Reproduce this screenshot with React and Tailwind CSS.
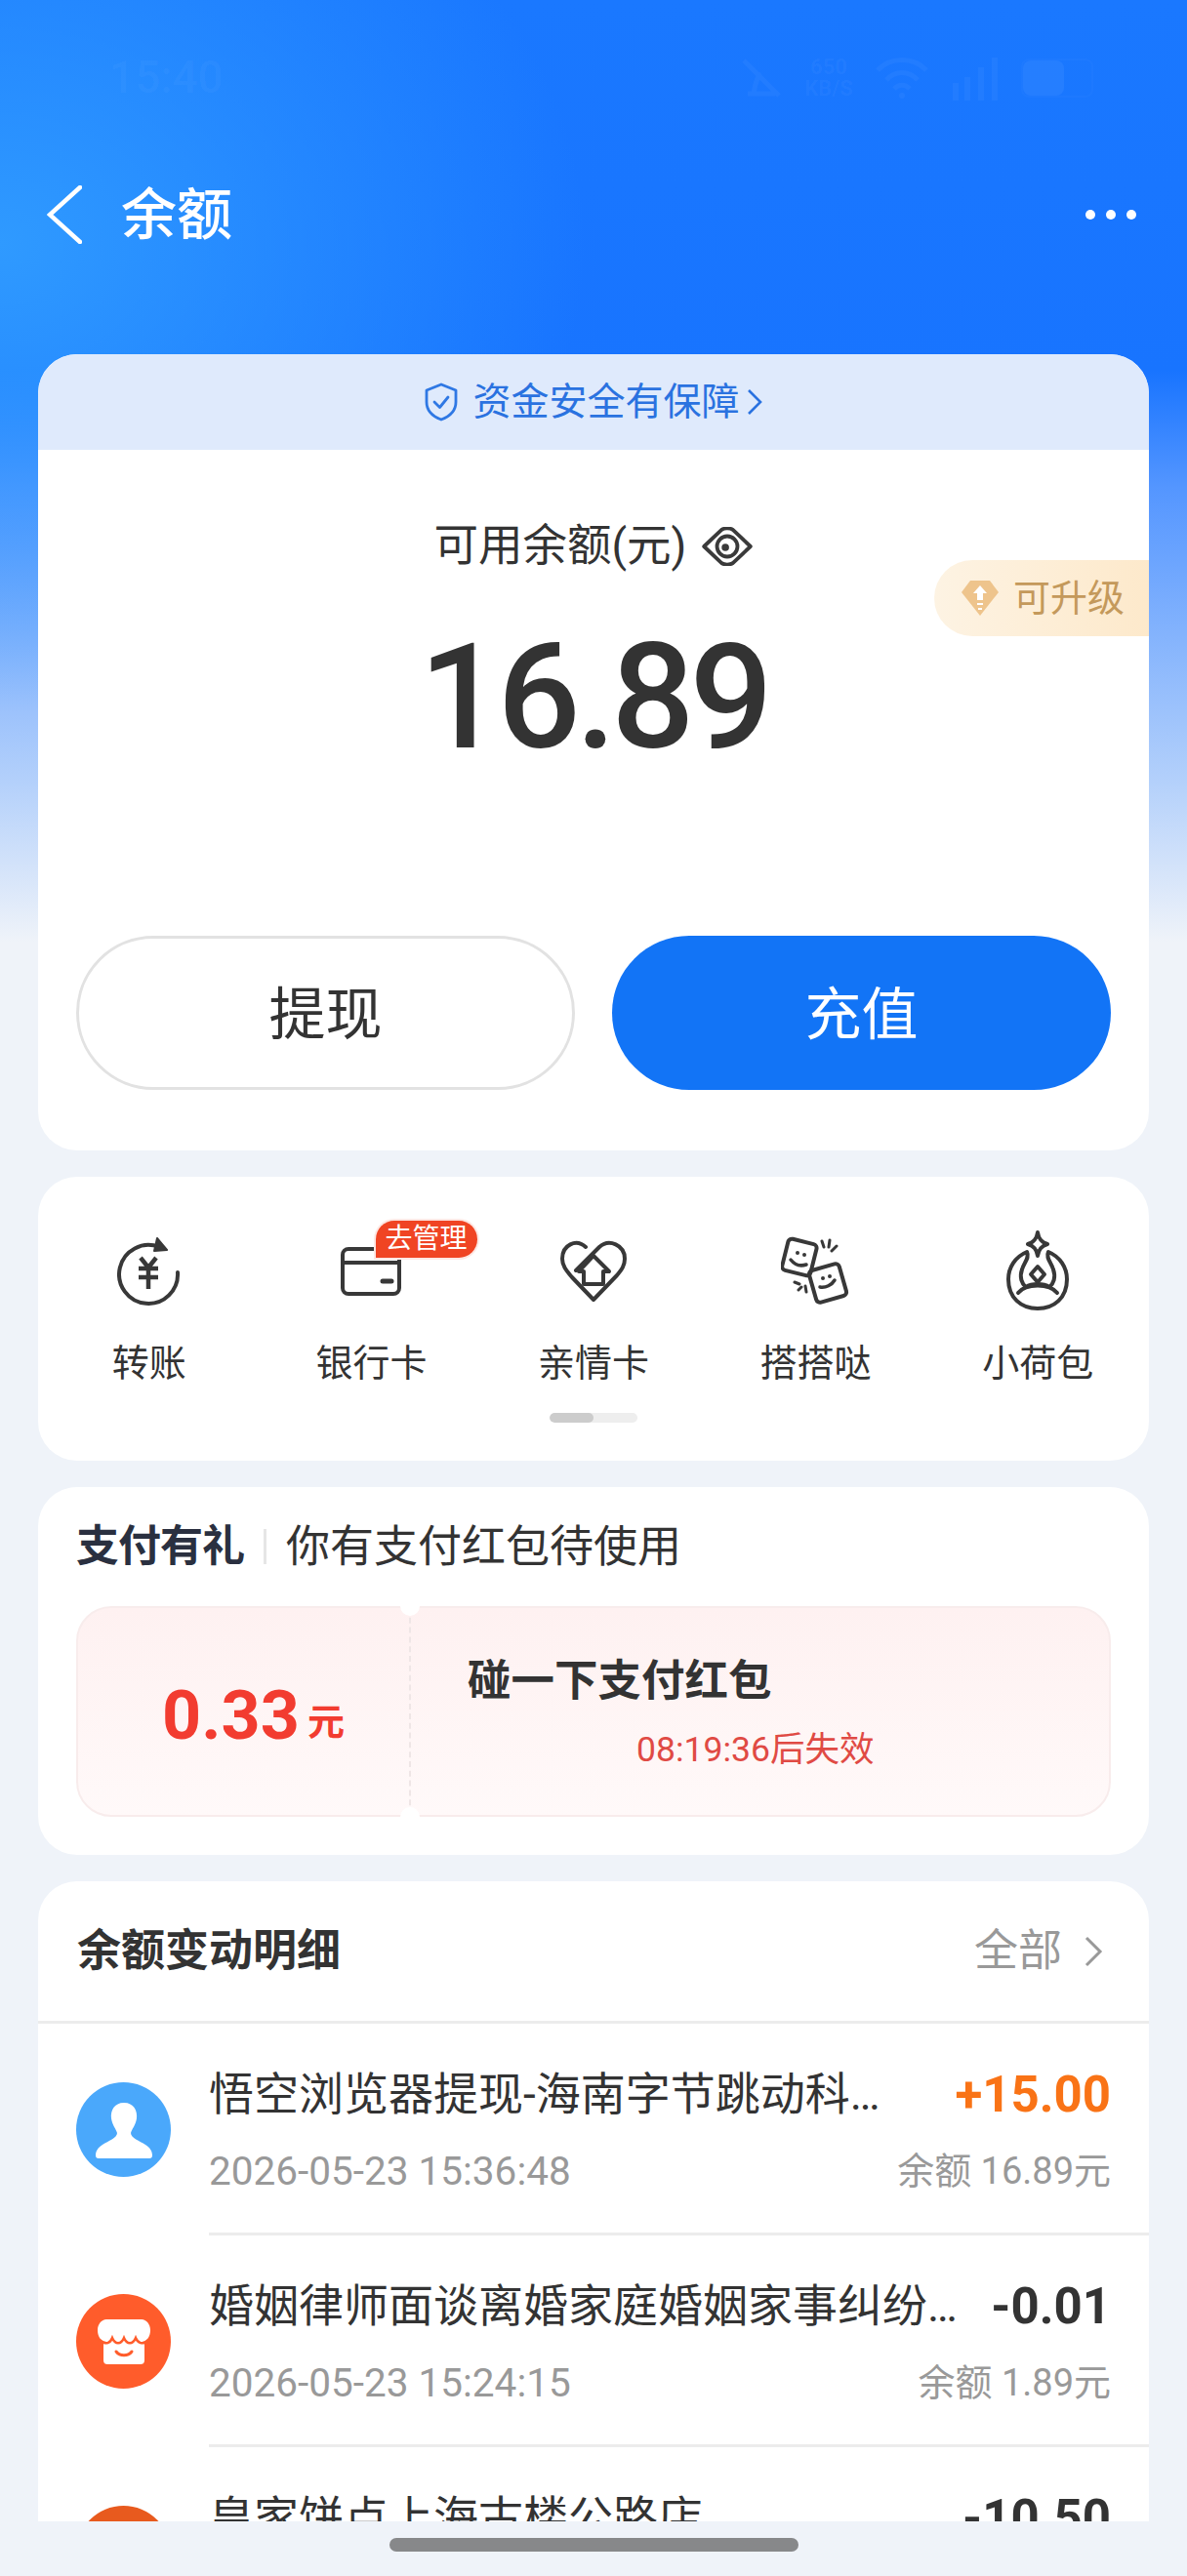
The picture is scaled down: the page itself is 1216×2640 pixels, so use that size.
import { ChevronRight } from 'lucide-react';

const cjk = "font-['Roboto','Noto_Sans_CJK_SC',sans-serif]";

const TransferIcon = () => (
	<svg width="66" height="72" viewBox="0 0 66 72" fill="none" stroke="#383838" strokeWidth="4" strokeLinecap="round" strokeLinejoin="round">
		<path d="M43 11 A30 30 0 1 0 62 37" />
		<path d="M41 2 L51 14 L38 15 Z" fill="#383838" strokeWidth="2" />
		<path d="M24 22 L32 32 L40 22 M22 33 H42 M22 42 H42 M32 32 V54" strokeWidth="4.5" strokeLinecap="butt" />
	</svg>
);

const CardIcon = () => (
	<svg width="62" height="50" viewBox="0 0 62 50" fill="none" stroke="#383838" strokeWidth="4">
		<rect x="2" y="2" width="58" height="46" rx="6" />
		<path d="M2 16 H60" />
		<path d="M43 35 H52" strokeWidth="5" strokeLinecap="round" />
	</svg>
);

const FamilyIcon = () => (
	<svg width="68" height="66" viewBox="0 0 68 66" fill="none" stroke="#383838" strokeWidth="4" strokeLinejoin="round" strokeLinecap="round">
		<path d="M26 8 C16 -1 2 6 2 20 C2 28 7 33 12 39 L34 62 L58 37 C63 31 66 27 66 20 C66 6 50 -1 40 8 L16 32" />
		<path d="M34 17 L50 33 L44 33 L44 46 L24 46 L24 33 L19 33 Z" />
	</svg>
);

const DiceIcon = () => (
	<svg width="72" height="74" viewBox="0 0 72 74" fill="none" stroke="#383838" strokeWidth="4" strokeLinecap="round" strokeLinejoin="round">
		<rect x="4" y="6" width="30" height="33" rx="4" transform="rotate(14 19 22)" />
		<rect x="32" y="32" width="32" height="34" rx="4" transform="rotate(-16 48 49)" />
		<path d="M10 25 C14 30 20 32 26 30" strokeWidth="3.5" />
		<path d="M40 53 C46 54 52 51 55 46" strokeWidth="3.5" />
		<circle cx="17" cy="18" r="2" fill="#383838" stroke="none" />
		<circle cx="24" cy="20" r="2" fill="#383838" stroke="none" />
		<circle cx="43" cy="44" r="2" fill="#383838" stroke="none" />
		<circle cx="50" cy="42" r="2" fill="#383838" stroke="none" />
		<path d="M42 6 L44 12 M50 5 L49 12 M57 11 L52 16 M14 48 L19 50 M18 56 L21 53 M26 58 L25 52" strokeWidth="3" />
	</svg>
);

const PouchIcon = () => (
	<svg width="64" height="84" viewBox="0 0 64 84" fill="none" stroke="#383838" strokeWidth="4" strokeLinecap="round" strokeLinejoin="round">
		<path d="M32 2 C33 9 36 12 42 14 C36 16 33 19 32 26 C31 19 28 16 22 14 C28 12 31 9 32 2 Z" />
		<path d="M21 22 C9 27 2 38 2 50 C2 69 15 80 32 80 C49 80 62 69 62 50 C62 38 55 27 43 22 C40 28 46 33 48 40 C51 48 48 55 44 58 C38 54 26 54 20 58 C16 55 13 48 16 40 C18 33 24 28 21 22 Z" />
		<path d="M12 64 C20 54 44 54 52 64" />
		<path d="M32 37 L39 45 L32 53 L25 45 Z" />
	</svg>
);

const tools = [
	{ label: '转账', icon: <TransferIcon /> },
	{ label: '银行卡', icon: <CardIcon />, badge: true },
	{ label: '亲情卡', icon: <FamilyIcon /> },
	{ label: '搭搭哒', icon: <DiceIcon /> },
	{ label: '小荷包', icon: <PouchIcon /> },
];

const PersonAvatar = () => (
	<div className="w-[97px] h-[97px] shrink-0 rounded-full bg-[#4aa8fb] flex items-center justify-center">
		<svg width="60" height="60" viewBox="0 0 60 60" fill="#fff">
			<path d="M30 2 C40 2 44 10 43 18 C42 25 38 29 37 33 C37 38 46 41 52 45 C57 48 59 52 59 56 C59 58 58 59 56 59 H4 C2 59 1 58 1 56 C1 52 3 48 8 45 C14 41 23 38 23 33 C22 29 18 25 17 18 C16 10 20 2 30 2 Z" />
		</svg>
	</div>
);

const ShopAvatar = ({ dark }) => (
	<div className={dark ? 'w-[97px] h-[97px] shrink-0 rounded-full bg-[#e85a1e]' : 'w-[97px] h-[97px] shrink-0 rounded-full bg-[#ff5c2b] flex items-center justify-center'}>
		{!dark && (
			<svg width="54" height="48" viewBox="0 0 54 48">
				<path d="M9 1 H45 C50 1 54 6 54 12 C54 18 51 22 48 24 V43 C48 46 46 47 44 47 H10 C8 47 6 46 6 43 V24 C3 22 0 18 0 12 C0 6 4 1 9 1 Z" fill="#fff" />
				<path d="M2 22 C9 28 13 25 15 20 C18 27 24 27 27 20 C30 27 36 27 39 20 C41 25 46 28 52 22" fill="none" stroke="#ff5c2b" strokeWidth="2.5" strokeLinecap="round" />
				<path d="M19 34 C23 39 31 39 35 34" fill="none" stroke="#ff5c2b" strokeWidth="3" strokeLinecap="round" />
			</svg>
		)}
	</div>
);

const records = [
	{ title: '悟空浏览器提现-海南字节跳动科…', time: '2026-05-23 15:36:48', amount: '+15.00', balance: '余额 16.89元', income: true, avatar: <PersonAvatar /> },
	{ title: '婚姻律师面谈离婚家庭婚姻家事纠纷…', time: '2026-05-23 15:24:15', amount: '-0.01', balance: '余额 1.89元', avatar: <ShopAvatar /> },
	{ title: '皇家饼点上海古楼公路店', time: '2026-05-23 14:52:07', amount: '-10.50', balance: '余额 1.90元', avatar: <ShopAvatar dark /> },
];

const StatusIcons = () => (
	<div className="flex items-center text-white/[.04]">
		<svg width="44" height="44" viewBox="0 0 44 44" fill="none" stroke="currentColor" strokeWidth="5">
			<path d="M4 4 L40 40 M8 38 H36 M14 38 C16 26 18 20 22 18" />
		</svg>
		<div className="ml-[12px] w-[70px] flex flex-col items-center text-[22px] leading-[22px] font-bold">
			<span>650</span>
			<span>KB/S</span>
		</div>
		<svg width="56" height="44" viewBox="0 0 56 44" fill="none" stroke="currentColor" strokeWidth="5" className="ml-[12px]">
			<path d="M3 14 C16 0 40 0 53 14 M12 24 C21 14 35 14 44 24 M20 33 C25 28 31 28 36 33" />
			<circle cx="28" cy="40" r="3" fill="currentColor" stroke="none" />
		</svg>
		<svg width="54" height="46" viewBox="0 0 54 46" fill="currentColor" className="ml-[22px]">
			<rect x="2" y="28" width="6" height="18" />
			<rect x="14" y="22" width="6" height="24" />
			<rect x="28" y="12" width="6" height="34" />
			<rect x="42" y="2" width="6" height="44" />
		</svg>
		<div className="ml-[18px] w-[74px] h-[40px] rounded-[8px] border-2 border-white/[.02]">
			<div className="w-[42px] h-full rounded-[8px] bg-white/[.05]" />
		</div>
	</div>
);

export default function App() {
	return (
		<div className={`${cjk} w-[1216px] h-[2640px] overflow-hidden flex flex-col bg-[radial-gradient(600px_480px_at_0px_250px,#2f9aff_0%,#2f9aff00_100%),linear-gradient(180deg,#1a78ff_0px,#1874ff_380px,#5496ff_500px,#b3d0fb_800px,#eff3f9_965px)]`}>
			{/* Header */}
			<header className="h-[363px] shrink-0 flex flex-col">
				<div className="h-[155px] pl-[112px] pr-[96px] pt-[4px] flex items-center justify-between">
					<span className="text-[46px] font-medium text-white/[.04]">15:40</span>
					<StatusIcons />
				</div>
				<div className="h-[130px] flex items-center pl-[48px] pr-[52px] text-white">
					<svg width="36" height="60" viewBox="0 0 36 60" fill="none" stroke="#fff" strokeWidth="4.5" strokeLinecap="round">
						<path d="M34 2 L3 30 L34 58" />
					</svg>
					<h1 className="ml-[40px] text-[57px] leading-none font-medium">余额</h1>
					<div className="ml-auto flex gap-[11px]">
						<span className="w-[10px] h-[10px] rounded-full bg-white" />
						<span className="w-[10px] h-[10px] rounded-full bg-white" />
						<span className="w-[10px] h-[10px] rounded-full bg-white" />
					</div>
				</div>
			</header>

			<main className="h-[2221px] shrink-0 overflow-hidden px-[39px] flex flex-col gap-[27px]">
				{/* Balance */}
				<section className="relative h-[816px] shrink-0 bg-white rounded-[40px] overflow-hidden flex flex-col items-center">
					<div className="w-full h-[98px] bg-[#dfeafc] flex items-center justify-center text-[#2a72e0] text-[39px]">
						<svg width="36" height="40" viewBox="0 0 36 40" fill="none" stroke="#2f78e4" strokeWidth="2.8" strokeLinecap="round" strokeLinejoin="round" className="mr-[14px]">
							<path d="M18 2 L33 8 V20 C33 29 26 35 18 38 C10 35 3 29 3 20 V8 Z" />
							<path d="M11 20 L16.5 25.5 L25 15" />
						</svg>
						<span>资金安全有保障</span>
						<svg width="18" height="30" viewBox="0 0 18 30" fill="none" stroke="#2a72e0" strokeWidth="2.6" className="ml-[6px]">
							<path d="M3 3 L15 15 L3 27" />
						</svg>
					</div>
					<div className="mt-[72px] flex items-center text-[45.5px] leading-[54px] text-[#333]">
						<span>可用余额(元)</span>
						<svg width="52" height="40" viewBox="0 0 54 42" fill="none" stroke="#3a3a3a" strokeWidth="4" className="ml-[16px]">
							<path d="M2 21 L21 3 C24 1 30 1 33 3 L52 21 L33 39 C30 41 24 41 21 39 Z" strokeLinejoin="round" />
							<circle cx="27" cy="21" r="11" />
							<circle cx="25" cy="22" r="4" fill="#3a3a3a" stroke="none" />
						</svg>
					</div>
					<div className="mt-[40px] text-[150px] leading-[176px] font-medium text-[#333] tracking-[-5px]">16.89</div>
					<div className="absolute right-0 top-[211px] w-[220px] h-[78px] rounded-l-[39px] bg-gradient-to-r from-[#fdf3e3] to-[#fde9cb] flex items-center pl-[27px] text-[38px] text-[#c4995b]">
						<svg width="40" height="40" viewBox="0 0 40 40" className="mr-[14px]">
							<path d="M10 2 H30 L39 14 L20 38 L1 14 Z" fill="#eec48c" />
							<path d="M20 7 L27 15 H23 V22 H17 V15 H13 Z M17 25 H23 V27 H17 Z M18 30 H22 V32 H18 Z" fill="#fff" />
						</svg>
						<span>可升级</span>
					</div>
					<div className="mt-auto w-full px-[39px] pb-[62px] grid grid-cols-2 gap-[38px] text-[58px]">
						<button className="h-[158px] pt-[4px] rounded-full border-[3px] border-[#e2e2e2] bg-white text-[#333]">提现</button>
						<button className="h-[158px] pt-[4px] rounded-full bg-[#1274f6] text-white">充值</button>
					</div>
				</section>

				{/* Tools */}
				<section className="relative h-[291px] shrink-0 bg-white rounded-[40px] pt-[52px]">
					<div className="grid grid-cols-5">
						{tools.map((tool) => (
							<div key={tool.label} className="relative flex flex-col items-center">
								<div className="h-[90px] flex items-center justify-center">{tool.icon}</div>
								<span className="mt-[24px] text-[38px] leading-[50px] text-[#333]">{tool.label}</span>
								{tool.badge && (
									<span className="absolute left-[118px] top-[-7px] w-[104px] h-[38px] rounded-full rounded-bl-[6px] bg-[#f04423] text-white text-[28px] leading-[38px] text-center ring-2 ring-[#fde8e4]">去管理</span>
								)}
							</div>
						))}
					</div>
					<div className="mt-[26px] mx-auto w-[90px] h-[10px] rounded-full bg-[#eeeeee] overflow-hidden">
						<div className="w-[45px] h-full rounded-full bg-[#cccccc]" />
					</div>
				</section>

				{/* Gift */}
				<section className="h-[377px] shrink-0 bg-white rounded-[40px] px-[39px] pt-[30px]">
					<div className="flex items-center h-[62px]">
						<span className="text-[44px] font-bold text-[#2a3040] leading-none tracking-[-1px]">支付有礼</span>
						<span className="w-[3px] h-[36px] bg-[#e6e6e6] mx-[20px]" />
						<span className="text-[45px] text-[#333] leading-none">你有支付红包待使用</span>
					</div>
					<div className="relative mt-[30px] flex h-[216px] rounded-[36px] border-2 border-[#f8ecec] bg-gradient-to-b from-[#fef1f1] to-[#fff9f9]">
						<div className="w-[339px] h-full flex items-center justify-center pl-[20px] pt-[8px] text-[#f23c30] font-bold">
							<span className="text-[70px] leading-none">0.33</span>
							<span className="ml-[8px] mt-[14px] text-[38px] leading-none">元</span>
						</div>
						<div className="flex-1 h-full border-l-2 border-dashed border-[#efe6e6] pl-[58px] pt-[46px]">
							<div className="text-[44.5px] leading-[58px] font-bold text-[#333]">碰一下支付红包</div>
							<div className="mt-[18px] ml-[173px] text-[35.5px] leading-[46px] text-[#e04a44]">08:19:36后失效</div>
						</div>
						<span className="absolute left-[330px] top-[-12px] w-[20px] h-[20px] rounded-full bg-white" />
						<span className="absolute left-[330px] bottom-[-12px] w-[20px] h-[20px] rounded-full bg-white" />
					</div>
				</section>

				{/* Records */}
				<section className="grow rounded-t-[40px] bg-white">
					<div className="h-[146px] border-b-[3px] border-[#ececec] pl-[40px] pr-[47px] flex items-center">
						<span className="text-[45px] font-bold text-[#333]">余额变动明细</span>
						<span className="ml-auto text-[45px] text-[#999]">全部</span>
						<svg width="20" height="34" viewBox="0 0 20 34" fill="none" stroke="#999" strokeWidth="3" className="ml-[22px]">
							<path d="M3 3 L17 17 L3 31" />
						</svg>
					</div>
					{records.map((item) => (
						<div key={item.time} className="flex items-center pl-[39px]">
							{item.avatar}
							<div className="ml-[39px] flex-1 min-w-0 h-[217px] border-b-[3px] border-[#ececec] pr-[39px] flex flex-col pt-[41px]">
								<div className="flex items-center justify-between h-[62px]">
									<span className="text-[46px] text-[#333] leading-none">{item.title}</span>
									<span className={item.income ? 'text-[51px] font-bold text-[#f97316] leading-none' : 'text-[51px] font-bold text-[#333] leading-none'}>{item.amount}</span>
								</div>
								<div className="mt-[23px] flex items-center justify-between h-[50px] text-[#999]">
									<span className="text-[40.5px] leading-none">{item.time}</span>
									<span className="text-[38px] leading-none">{item.balance}</span>
								</div>
							</div>
						</div>
					))}
				</section>
			</main>

			<div className="h-[56px] shrink-0 bg-[#eff3f9] flex justify-center pt-[17px]">
				<div className="w-[419px] h-[14px] rounded-full bg-[#87888a]" />
			</div>
		</div>
	);
}
